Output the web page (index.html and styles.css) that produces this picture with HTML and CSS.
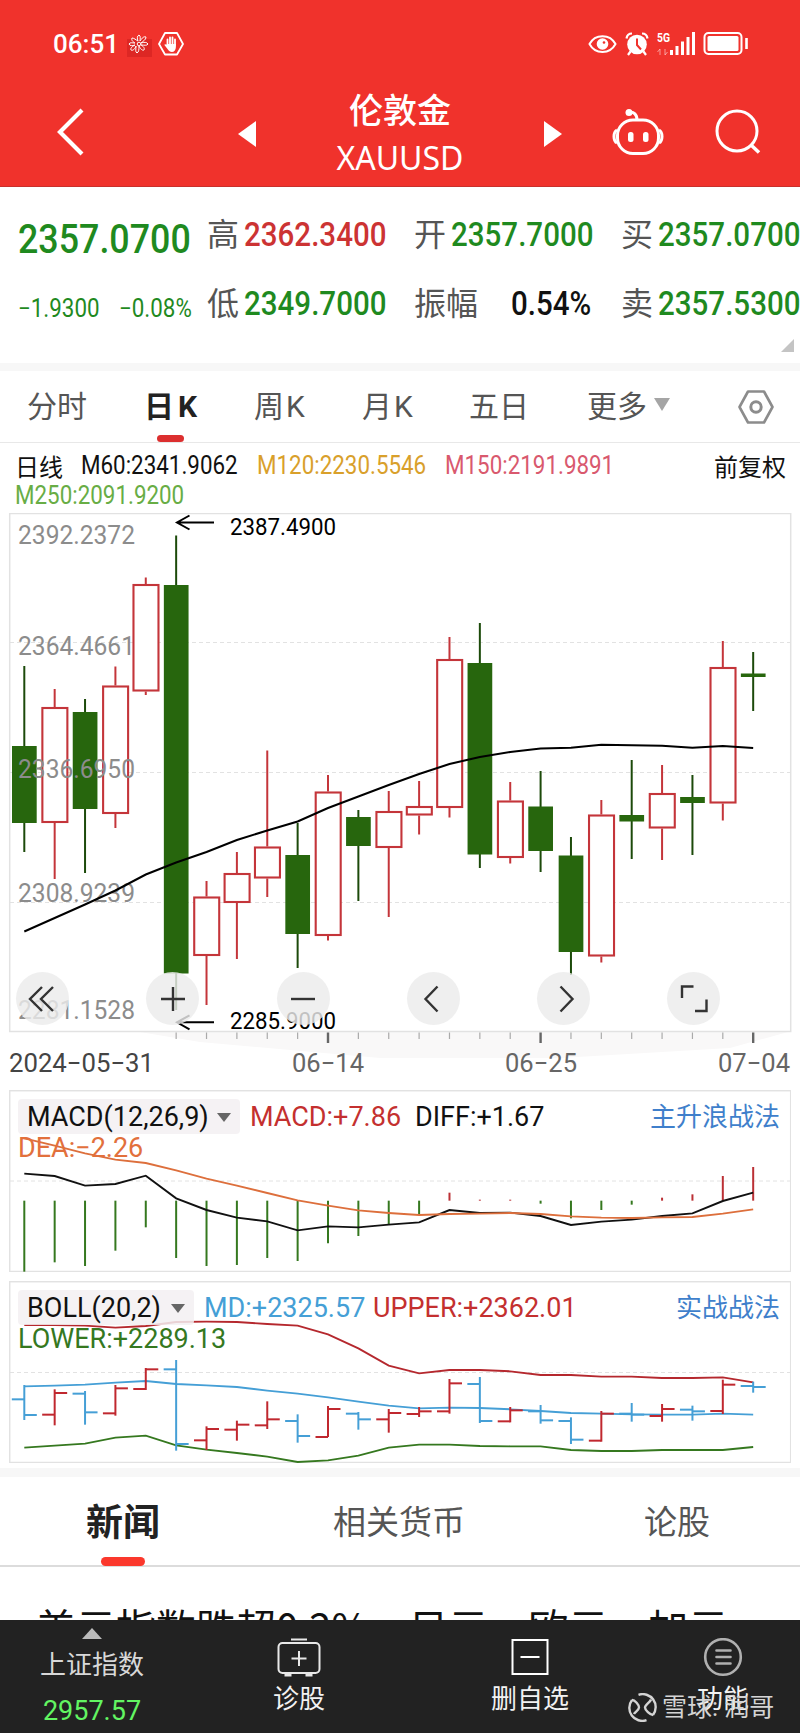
FILE: index.html
```html
<!DOCTYPE html>
<html lang="zh-CN">
<head>
  <meta charset="UTF-8">
  <meta name="viewport" content="width=device-width, initial-scale=1.0">
  <title>伦敦金 XAUUSD</title>
  <link rel="stylesheet" href="styles.css">
</head>
<body>
  <header class="header">
    <div class="status">
      <span class="time">06:51</span>
      <svg class="flower" width="26" height="26" viewBox="0 0 26 26">
        <path d="M0 8h25v18H0z" fill="#d0201f" opacity=".6"/>
        <g fill="none" stroke="#fff" stroke-width="1">
          <circle cx="12" cy="13" r="1.800"/>
          <path d="M11 10c-1-3-1-5 1-6 2 1 1 4 1 6 2-3 4-5 6-4 0 3-3 4-5 6 3-1 6-1 7 1-1 2-4 1-7 1 2 1 4 3 3 5-2 1-4-2-5-4 0 3 0 6-2 7-2-1-1-4-1-7-1 3-3 5-5 4-1-2 2-4 4-5-3 1-5 1-6-1 1-2 3-1 6-1-2-1-4-3-3-5 2 0 4 2 6 3z"/>
        </g>
      </svg>
      <svg class="hand" width="26" height="26" viewBox="0 0 26 26">
        <path d="M7 2h12l6 11-6 10.500H7L1 13z" fill="none" stroke="#fff" stroke-width="1.800" stroke-linejoin="round"/>
        <path d="M9.500 14V8.500M12 13V6.500M14.500 13V6.500M17 14V8.500" stroke="#fff" stroke-width="1.800" stroke-linecap="round"/>
        <path d="M8.600 13h9.300v3c0 3-2 5-4 5s-3-1-4-2.500l-3.500-4.500c0-1 1.500-1 2.200 0z" fill="#fff"/>
      </svg>
      <svg class="eye" width="29" height="22" viewBox="0 0 29 22">
        <path d="M1.500 11C7 .500 22 .500 27.500 11 22 21.500 7 21.500 1.500 11z" fill="none" stroke="#fff" stroke-width="2"/>
        <circle cx="14.500" cy="11" r="5.800" fill="#fff"/>
        <circle cx="16" cy="9.500" r="1.300" fill="#f0322c"/>
      </svg>
      <svg class="alarm" width="24" height="24" viewBox="0 0 24 24">
        <circle cx="12" cy="12.500" r="9.800" fill="#fff"/>
        <path d="M1.500 6.500C2 3 4 1.500 7 1.500M22.500 6.500C22 3 20 1.500 17 1.500M5.500 19.500L3 23M18.500 19.500L21 23" fill="none" stroke="#fff" stroke-width="2.200"/>
        <path d="M12 6.500v6.500l4 4.500" fill="none" stroke="#f0322c" stroke-width="2"/>
      </svg>
      <svg class="signal" width="40" height="26" viewBox="0 0 40 26">
        <text x="0" y="11" textLength="13" lengthAdjust="spacingAndGlyphs" class="net">5G</text>
        <path d="M3 24v-6l-2.500 3M8 18v6l2.500-3" fill="none" stroke="#fff" opacity=".5"/>
        <path d="M14.500 24v-5M20 24v-9M25.500 24V10.500M31 24V6M36.500 24V1" stroke="#fff" stroke-width="3"/>
      </svg>
      <svg width="46" height="26" viewBox="0 0 46 26">
        <rect x="1.500" y="2" width="37" height="21" rx="4" fill="none" stroke="#fff" stroke-width="2"/>
        <rect x="4.500" y="5" width="31" height="15" rx="1.500" fill="#fff"/>
        <path d="M43.500 7v11" stroke="#fff" stroke-width="2.600"/>
      </svg>
    </div>
    <div class="nav">
      <svg class="back" width="28" height="50" viewBox="0 0 28 50">
        <path d="M25 3L3 25l22 22" fill="none" stroke="#fff" stroke-width="4.200"/>
      </svg>
      <svg class="tri" width="18" height="26" viewBox="0 0 18 26"><path d="M18 0v26L0 13z" fill="#fff"/></svg>
      <div class="title">
        <div class="title-name">伦敦金</div>
        <div class="title-code">XAUUSD</div>
      </div>
      <svg class="tri" width="18" height="26" viewBox="0 0 18 26"><path d="M0 0v26l18-13z" fill="#fff"/></svg>
      <svg class="robot" width="52" height="48" viewBox="0 0 52 48">
        <g fill="none" stroke="#fff" stroke-width="3">
          <rect x="5.500" y="12" width="41" height="33.500" rx="15.500"/>
          <path d="M17 4.500c5-1 8 2 8 7.500"/>
          <path d="M5 22c-4 2-4 11 0 13M47 22c4 2 4 11 0 13"/>
        </g>
        <circle cx="17" cy="4.500" r="3.500" fill="#fff"/>
        <rect x="16" y="24" width="5.500" height="10" rx="2.500" fill="#fff"/>
        <rect x="31" y="24" width="5.500" height="10" rx="2.500" fill="#fff"/>
      </svg>
      <svg class="search" width="46" height="46" viewBox="0 0 46 46">
        <circle cx="22" cy="22" r="20" fill="none" stroke="#fff" stroke-width="3"/>
        <path d="M36 36l8 7.500" stroke="#fff" stroke-width="3.500"/>
      </svg>
    </div>
  </header>

  <section class="quote">
    <div class="price"><span class="num">2357.0700</span></div>
    <div class="cell"><label>高</label><span class="num up">2362.3400</span></div>
    <div class="cell"><label>开</label><span class="num">2357.7000</span></div>
    <div class="cell"><label>买</label><span class="num">2357.0700</span></div>
    <div class="change"><span class="num">−1.9300</span><span class="num">−0.08%</span></div>
    <div class="cell"><label>低</label><span class="num">2349.7000</span></div>
    <div class="cell wide"><label>振幅</label><span class="num black">0.54%</span></div>
    <div class="cell"><label>卖</label><span class="num">2357.5300</span></div>
    <i class="corner"></i>
  </section>

  <nav class="tabs">
    <span>分时</span>
    <span class="active">日K</span>
    <span class="k">周K</span>
    <span class="k">月K</span>
    <span>五日</span>
    <span class="more">更多<i class="caret"></i></span>
    <svg width="36" height="34" viewBox="0 0 36 34" fill="none" stroke="#8c8c8c" stroke-width="2.600">
      <path d="M10 1.500h16L34.500 17 26 32.500H10L1.500 17z" stroke-linejoin="round"/>
      <circle cx="18" cy="17" r="5.200" stroke-width="3"/>
    </svg>
  </nav>

  <section class="averages">
    <span class="cn">日线</span>
    <span class="num">M60:2341.9062</span>
    <span class="num m120">M120:2230.5546</span>
    <span class="num m150">M150:2191.9891</span>
    <span class="cn">前复权</span>
    <span class="num m250">M250:2091.9200</span>
  </section>

  <section class="kline">
    <svg id="kline" width="800" height="577" viewBox="0 513 800 577"></svg>
    <div class="tools">
      <button><svg viewBox="0 0 30 30"><path d="M14 3L2 15l12 12M25 3L13 15l12 12"/></svg></button>
      <button><svg viewBox="0 0 30 30"><path d="M3 15h24M15 3v24"/></svg></button>
      <button><svg viewBox="0 0 30 30"><path d="M3 15h24"/></svg></button>
      <button><svg viewBox="0 0 30 30"><path d="M19.500 2.500L7.500 15l12 12.500"/></svg></button>
      <button><svg viewBox="0 0 30 30"><path d="M11.500 2.500L23.500 15l-12 12.500"/></svg></button>
      <button><svg viewBox="0 0 30 30"><path d="M3 14V2.500h11.500M16 27h11.500V15.500"/></svg></button>
    </div>
  </section>

  <section class="panel macd">
    <svg id="macd" width="782" height="182" viewBox="9 1090 782 182"></svg>
    <div class="legend">
      <span class="pill"><span>MACD(12,26,9)</span><i class="caret"></i></span>
      <span class="red">MACD:+7.86</span>
      <span>DIFF:+1.67</span>
      <a>主升浪战法</a>
      <span class="second orange">DEA:−2.26</span>
    </div>
  </section>

  <section class="panel boll">
    <svg id="boll" width="782" height="182" viewBox="9 1281 782 182"></svg>
    <div class="legend">
      <span class="pill"><span>BOLL(20,2)</span><i class="caret"></i></span>
      <span class="blue">MD:+2325.57</span>
      <span class="red">UPPER:+2362.01</span>
      <a>实战战法</a>
      <span class="second green">LOWER:+2289.13</span>
    </div>
  </section>

  <section class="news">
    <div class="news-tabs">
      <span class="active">新闻</span>
      <span>相关货币</span>
      <span>论股</span>
    </div>
    <p class="headline">美元指数跌超0.2%，日元、欧元、加元</p>
  </section>

  <footer class="bottom">
    <div class="index">
      <i class="arrow-up"></i>
      <span>上证指数</span>
      <span class="index-value">2957.57</span>
    </div>
    <div class="item">
      <svg width="44" height="39" viewBox="0 0 44 39" fill="none" stroke="#e8e8e8" stroke-width="2">
        <rect x="1.500" y="5" width="41" height="30" rx="4"/>
        <path d="M14 1.500h16M22 13v15M14.500 20.500h15"/>
        <path d="M7.500 37h7M28.500 37h7" stroke-width="3"/>
      </svg>
      <span>诊股</span>
    </div>
    <div class="item">
      <svg width="38" height="39" viewBox="0 0 38 39" fill="none" stroke="#fff" stroke-width="2">
        <rect x="1.500" y="2" width="35" height="34"/>
        <path d="M9.500 19h19"/>
      </svg>
      <span>删自选</span>
    </div>
    <div class="item">
      <svg width="40" height="39" viewBox="0 0 40 39" fill="none" stroke="#b0b0b0" stroke-width="2.600">
        <circle cx="20" cy="19" r="17.800"/>
        <path d="M13.500 12.500h14M13.500 19h14M13.500 25.500h14" stroke-linecap="round"/>
      </svg>
      <span>功能</span>
    </div>
    <div class="author">
      <svg width="29" height="29" viewBox="0 0 29 29" fill="none" stroke="#d4d4d4" stroke-width="2.400">
        <path d="M10.500 1.800A13 13 0 0 1 25 22M18.500 27.200A13 13 0 0 1 4 7"/>
        <path d="M4 7c3 0 7 5 7 7.500S7 19 6 21M25 22c-3 0-8-5-8-7.500s5-5 6-8"/>
      </svg>
      <span>雪球: 润哥</span>
    </div>
  </footer>
  <script src="chart.js"></script>
</body>
</html>
```
FILE: styles.css
```css
body {
  margin: 0;
  width: 800px;
  height: 1733px;
  overflow: hidden;
  display: flex;
  flex-direction: column;
  background: #fff;
  color: #111;
  font-family: Roboto, "Noto Sans CJK SC", sans-serif;
}

section, nav, header, footer {
  box-sizing: border-box;
  flex: none;
}

svg {
  display: block;
  flex: none;
}

/* narrow figures */
.num {
  display: inline-block;
  transform: scaleX(.895);
  transform-origin: 0 50%;
  white-space: nowrap;
}

.red { color: #c4302f; }
.orange { color: #e2703c; }
.blue { color: #459fd6; }
.green { color: #35781f; }

/* header */
.header {
  height: 187px;
  background: #f0322c;
  border-bottom: 1px solid #c8302c;
  color: #fff;
}

.status {
  height: 88px;
  display: flex;
  align-items: center;
  padding-left: 53px;
}

.time {
  width: 74px;
  font-size: 26px;
  font-weight: 500;
}

.hand { margin-left: 5px; }
.eye { margin-left: 404px; }
.alarm { margin-left: 8px; }
.signal { margin: 0 6px 0 8px; }

.net {
  font-size: 13px;
  font-weight: 700;
  fill: #fff;
}

.nav {
  height: 98px;
  display: flex;
  align-items: center;
  padding: 0 0 11px 57px;
  box-sizing: border-box;
}

.back { margin-right: 153px; }
.tri { margin-top: 4px; }

.title {
  width: 288px;
  text-align: center;
}

.title-name {
  font-size: 34px;
  line-height: 44px;
  font-weight: 500;
  padding-top: 9px;
}

.title-code {
  font-family: "Noto Sans", sans-serif;
  font-size: 32px;
  line-height: 50px;
}

.robot { margin-left: 50px; }
.search { margin-left: 51px; }

/* quote */
.quote {
  position: relative;
  height: 184px;
  padding: 13px 0 0 18px;
  border-bottom: 8px solid #f7f7f7;
  display: grid;
  grid-template: 69px 69px / 189px 207px 207px 179px;
  align-items: center;
  color: #1f8a1f;
}

.price {
  font-size: 40px;
  font-weight: 500;
  padding-top: 10px;
}

.change {
  display: grid;
  grid-template-columns: 101px 80px;
  font-size: 25px;
  padding-top: 9px;
}

.cell {
  display: grid;
  grid-template-columns: 37px auto;
  align-items: center;
  font-size: 33px;
  font-weight: 500;
}

.cell.wide { grid-template-columns: 97px auto; }

.cell label {
  font-size: 32px;
  font-weight: 400;
  line-height: 40px;
  color: #555;
}

.cell .up { color: #cc3333; }
.cell .black { color: #111; }

.corner {
  position: absolute;
  right: 6px;
  bottom: 11px;
  border-left: 13px solid transparent;
  border-bottom: 13px solid #c4c4c4;
}

/* period tabs */
.tabs {
  height: 72px;
  border-bottom: 1px solid #e8e8e8;
  padding-left: 27px;
  display: grid;
  grid-template-columns: 117px 110px 108px 107px 118px 151px auto;
  align-items: center;
  font-size: 30px;
  color: #555;
}

.tabs > span {
  padding-bottom: 5px;
}

.tabs .k { letter-spacing: 2px; }

.tabs .active {
  position: relative;
  font-weight: 700;
  letter-spacing: 4px;
  color: #222;
}

.tabs .active::after {
  content: "";
  position: absolute;
  left: 13px;
  bottom: -11px;
  width: 27px;
  height: 7px;
  border-radius: 4px;
  background: #dc2f2f;
}

.more {
  display: flex;
  align-items: center;
}

.caret {
  border: 8px solid transparent;
  border-top: 13px solid #a5a5a5;
  border-bottom: 0;
  margin-left: 7px;
}

/* moving averages */
.averages {
  height: 70px;
  padding: 7px 0 0 15px;
  display: grid;
  grid-template: 30px 30px / 66px 176px 188px 269px auto;
  align-items: center;
  font-size: 25px;
}

.averages .cn {
  font-size: 24px;
}

.m120 { color: #d9a02b; }
.m150 { color: #d9596e; }
.m250 {
  grid-column: 1 / 3;
  justify-self: start;
  color: #68ad45;
}

/* candles */
.kline {
  position: relative;
  height: 577px;
}

.tools {
  position: absolute;
  left: 16px;
  top: 459px;
  display: flex;
  gap: 77.3px;
}

.tools button {
  width: 53px;
  height: 53px;
  padding: 0;
  border: 0;
  border-radius: 50%;
  background: rgba(236, 236, 236, .82);
  display: flex;
  align-items: center;
  justify-content: center;
}

.tools svg {
  width: 30px;
  height: 30px;
  fill: none;
  stroke: #333;
  stroke-width: 2.4;
}

.frame {
  fill: none;
  stroke: #e2e2e2;
  stroke-width: 1.5;
}

.grid {
  stroke: #e2e2e2;
  stroke-dasharray: 4 3;
}

.price-label { font-size: 26px; fill: #8c8c8c; }
.mark { font-size: 24px; fill: #000; }
.date { font-size: 26px; fill: #666; }
.date.first { fill: #444; }

/* indicator panels */
.panel {
  position: relative;
  height: 182px;
  margin: 0 9px;
}

.panel > svg {
  position: absolute;
}

.boll { margin-top: 9px; }

.legend {
  position: relative;
  display: grid;
  grid-template-rows: 35px 27px;
  align-items: center;
  padding: 9px 0 0 9px;
  font-size: 27px;
  line-height: 27px;
  white-space: nowrap;
}

.legend > span:not(.pill) { padding-top: 2px; }

.macd .legend { grid-template-columns: 232px 165px 235px auto; }
.boll .legend { grid-template-columns: 186px 169px 303px auto; }

.pill {
  display: grid;
  align-items: center;
  height: 33px;
  padding-top: 2px;
  border-radius: 4px;
  background: rgba(243, 240, 242, .85);
  padding-left: 9px;
}

.macd .pill { width: 213px; grid-template-columns: 190px auto; }
.boll .pill { width: 167px; grid-template-columns: 144px auto; }

.pill .caret {
  justify-self: start;
  margin-left: 0;
  border-width: 9px 7px 0;
  border-top-color: #666;
}

.legend a {
  font-size: 26px;
  color: #3f7fcb;
  padding-top: 1px;
}

.second { grid-column: 1 / 3; }

/* news */
.news {
  height: 152px;
  margin-top: 5px;
  border-top: 9px solid #f7f7f7;
  overflow: hidden;
}

.news-tabs {
  height: 88px;
  border-bottom: 2px solid #dcdcdc;
  padding-left: 86px;
  display: grid;
  grid-template-columns: 247px 311px auto;
  align-items: center;
  font-size: 33px;
  color: #555;
}

.news-tabs > span { padding-bottom: 2px; }

.news-tabs .active {
  position: relative;
  font-size: 37px;
  font-weight: 700;
  color: #222;
}

.news-tabs .active::after {
  content: "";
  position: absolute;
  left: 15px;
  bottom: -17px;
  width: 44px;
  height: 9px;
  border-radius: 5px;
  background: #fb382c;
}

.headline {
  margin: 29px 0 0 36px;
  font-family: "Noto Sans CJK SC", sans-serif;
  font-size: 40px;
  line-height: 60px;
  white-space: nowrap;
}

/* bottom bar */
.bottom {
  position: relative;
  height: 113px;
  background: #222;
  color: #f2f2f2;
  display: grid;
  grid-template-columns: 184px 230px 232px 154px;
  font-size: 26px;
}

.index {
  display: flex;
  flex-direction: column;
  align-items: center;
  padding-top: 8px;
  color: #d8d8d8;
}

.index > span {
  line-height: 30px;
  margin-top: 11px;
}

.index > .index-value {
  color: #62f562;
  font-size: 27px;
  line-height: 32px;
  margin-top: 15px;
}

.arrow-up {
  border: 10px solid transparent;
  border-bottom: 11px solid #bbb;
  border-top: 0;
}

.item {
  display: flex;
  flex-direction: column;
  align-items: center;
  padding-top: 18px;
}

.item span {
  line-height: 30px;
  margin-top: 7px;
}

.author {
  position: absolute;
  left: 628px;
  top: 73px;
  display: flex;
  align-items: center;
  gap: 5px;
  font-size: 25px;
  line-height: 29px;
  color: #d4d4d4;
}
```
FILE: chart.js
```js
const step = 30.37;
const x = (i) => 24.3 + i * step;
const RED = '#c4353a';
const GREEN = '#27660d';

// high, top, bottom, low, rising
const candles = [
  [666, 746, 823, 852, 0],
  [689, 707, 823, 879, 1],
  [699, 712, 809, 873, 0],
  [666.5, 685.5, 814, 828, 1],
  [577.5, 584, 691.5, 695, 1],
  [535.5, 585, 973.5, 1010, 0],
  [881, 896.5, 956, 1005, 1],
  [852, 873, 903, 959, 1],
  [750.5, 846.5, 878.5, 897, 1],
  [823, 855, 934, 968, 0],
  [775, 791.5, 936, 940.5, 1],
  [810, 817, 846, 901, 0],
  [791, 811, 848, 917, 1],
  [781, 806, 815.5, 834.5, 1],
  [637, 659, 808, 817.5, 1],
  [623, 663, 854.5, 868, 0],
  [782, 800.5, 858, 863.5, 1],
  [771, 806.5, 851, 872, 0],
  [837, 855.5, 952, 975, 0],
  [800, 814.5, 956.5, 962.5, 1],
  [760, 815, 821.5, 859, 0],
  [765, 793, 828.5, 860, 1],
  [775, 797, 803, 855, 0],
  [641, 667, 803.5, 820.5, 1],
  [652, 673.5, 677, 711, 0]
];

const ma60 = [931.5, 918, 904.5, 890.5, 874.5, 862.5, 852, 840, 830.5, 821.5, 808, 796.5, 785,
  774, 764, 757, 752, 748.5, 747.7, 744.7, 745.3, 745.7, 747.7, 746, 748];

// the panels below are measured from the top of the MACD area, in thirds
const y = (v) => 1085 + v / 3;

const bars = [560, 532, 543, 497, 427, 519, 543, 540, 519, 528, 475, 453, 418, 388, 323, 344, 344,
  356, 400, 375, 359, 338, 328, 273, 246];
const diff = [266, 273, 302, 297, 272, 340, 375, 398, 409, 436, 424, 427, 419, 412, 375, 384, 383,
  393, 420, 410, 404, 393, 385, 348, 323];
const dea = [160, 182, 205, 224, 234, 256, 281, 302, 324, 346, 362, 376, 384, 390, 387, 386, 384,
  387, 394, 398, 399, 397, 396, 386, 373];

const upper = [720, 720, 722, 728, 723, 711, 710, 711, 717, 722, 748, 790, 842, 865, 855, 855, 859,
  870, 870, 875, 875, 879, 879, 877, 892];
const mid = [904, 902, 899, 893, 888, 897, 901, 906, 917, 926, 937, 950, 962, 970, 968, 969, 973,
  978, 984, 986, 988, 989, 989, 986, 989];
const lower = [1088, 1082, 1076, 1058, 1052, 1081, 1094, 1104, 1115, 1131, 1126, 1112, 1088, 1079,
  1079, 1083, 1084, 1084, 1095, 1098, 1098, 1095, 1095, 1095, 1086];

// high, low, open, close, rising
const ohlc = [
  [900, 1005, 943, 990, 0], [913, 1021, 989, 924, 1], [918, 1019, 926, 982, 0],
  [900, 992, 985, 910, 1], [849, 915, 912, 853, 1], [825, 1097, 853, 1077, 0],
  [1024, 1095, 1066, 1032, 1], [1007, 1067, 1034, 1019, 1], [949, 1032, 1021, 1003, 1],
  [988, 1073, 1008, 1053, 0], [963, 1056, 1056, 972, 1], [981, 1034, 986, 1003, 0],
  [972, 1043, 1003, 984, 1], [966, 996, 987, 979, 1], [882, 986, 979, 895, 1],
  [876, 1014, 897, 1008, 0], [966, 1012, 1009, 976, 1], [960, 1016, 979, 1006, 0],
  [997, 1077, 1008, 1064, 0], [978, 1070, 1067, 986, 1], [954, 1010, 986, 989, 0],
  [957, 1010, 993, 972, 1], [962, 1007, 974, 979, 0], [884, 987, 978, 899, 1],
  [890, 923, 903, 906, 0]
];

const line = (x1, y1, x2, y2, color, width) =>
  `<line x1="${x1}" y1="${y1}" x2="${x2}" y2="${y2}" stroke="${color}" stroke-width="${width}"/>`;
const curve = (ys, color, width = 1.9) =>
  `<polyline fill="none" stroke="${color}" stroke-width="${width}" points="${ys.map((v, i) => `${x(i)},${v}`).join(' ')}"/>`;
const text = (cls, tx, ty, len, str) =>
  `<text class="${cls}" x="${tx}" y="${ty}" textLength="${len}" lengthAdjust="spacingAndGlyphs">${str}</text>`;
const grid = (gy) => `<line class="grid" x1="10" y1="${gy}" x2="790" y2="${gy}"/>`;

function drawKline() {
  let out = '<path d="M140 1032H788L730 1048 560 1058H380L200 1042z" fill="#f9f8f8"/>';
  out += '<rect class="frame" x="9.7" y="513.5" width="781" height="518"/>';
  out += [642.5, 772.5, 902.5].map(grid).join('');
  candles.forEach(([high, top, bottom, low, rising], i) => {
    const cx = x(i);
    if (rising) {
      out += line(cx, high, cx, top, RED, 2) + line(cx, bottom, cx, low, RED, 2);
      out += `<rect x="${cx - 12.3}" y="${top + 1}" width="25" height="${bottom - top - 2}" fill="#fff" stroke="${RED}" stroke-width="2.1"/>`;
    } else {
      out += line(cx, high, cx, low, '#1c4a0a', 2);
      out += `<rect x="${cx - 12.3}" y="${top}" width="24.7" height="${bottom - top}" fill="${GREEN}"/>`;
    }
  });
  out += [544.3, 655.3, 778.3, 902, 1019].map((ty, i) =>
    text('price-label', 18, ty, 117, ['2392.2372', '2364.4661', '2336.6950', '2308.9239', '2281.1528'][i])).join('');
  out += curve(ma60, '#000', 2);
  out += [522.5, 1022.3].map((ay) =>
    `<path d="M214 ${ay}H177M189.500 ${ay - 7}L177 ${ay}l12.500 7" fill="none" stroke="#000" stroke-width="2"/>`).join('');
  out += text('mark', 230, 535.3, 106, '2387.4900') + text('mark', 230, 1029.3, 106, '2285.9000');
  for (let i = 5; i < 25; i++) {
    const long = [10, 17, 24].includes(i);
    out += line(x(i), 1032.5, x(i), long ? 1043 : 1039, long ? '#666' : '#aaa', long ? 2.4 : 1.2);
  }
  out += text('date first', 9, 1072, 145, '2024−05−31');
  out += text('date', 292, 1072, 72, '06−14');
  out += text('date', 505, 1072, 72, '06−25');
  out += text('date', 718, 1072, 72, '07−04');
  document.getElementById('kline').innerHTML = out;
}

function drawMacd() {
  let out = '<rect class="frame" x="9.7" y="1090.7" width="781" height="180.8"/>' + grid(1181);
  bars.forEach((v, i) => {
    out += line(x(i), y(347), x(i), y(v), v > 347 ? '#35781f' : '#bb3035', 2);
  });
  out += curve(diff.map(y), '#111') + curve(dea.map(y), '#dd6f3c');
  document.getElementById('macd').innerHTML = out;
}

function drawBoll() {
  let out = '<rect class="frame" x="9.7" y="1281.7" width="781" height="180.8"/>' + grid(1372.5);
  out += curve(upper.map(y), '#b5282e') + curve(mid.map(y), '#459fd6') + curve(lower.map(y), '#35781f');
  ohlc.forEach(([high, low, open, close, rising], i) => {
    const cx = x(i);
    const color = rising ? '#c0282f' : '#459fd6';
    out += line(cx, y(high), cx, y(low), color, 2);
    out += line(cx - 12.5, y(open), cx, y(open), color, 2);
    out += line(cx, y(close), cx + 12.5, y(close), color, 2);
  });
  document.getElementById('boll').innerHTML = out;
}

drawKline();
drawMacd();
drawBoll();
```
